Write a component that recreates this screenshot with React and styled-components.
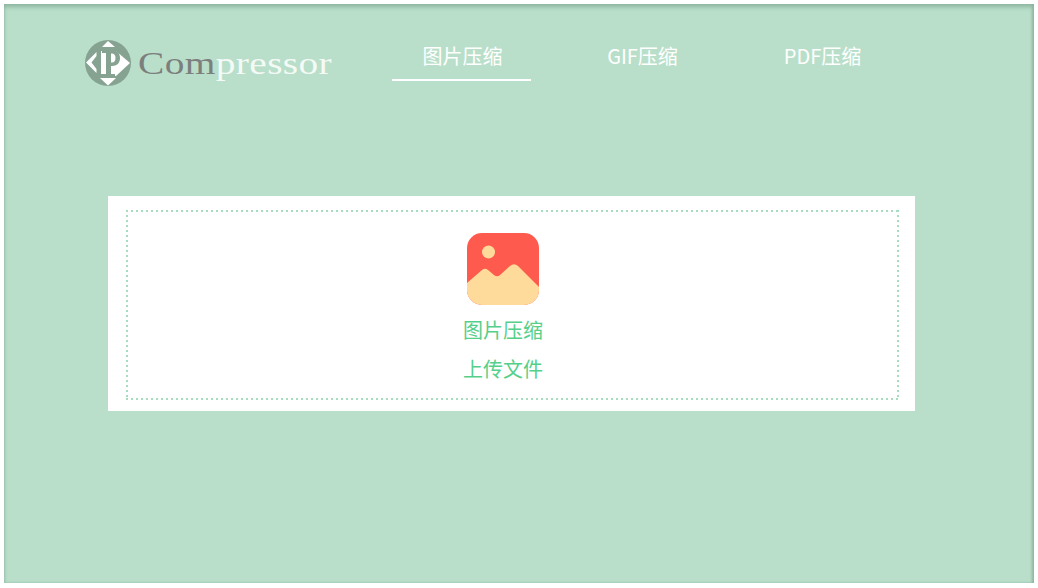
import React from "react";
import styled, { createGlobalStyle } from "styled-components";

const GlobalStyle = createGlobalStyle`
  html, body {
    margin: 0;
    padding: 0;
    background: #fff;
  }
  body {
    font-family: "Noto Sans CJK SC", "Noto Sans", sans-serif;
  }
`;

const Page = styled.div`
  box-sizing: border-box;
  width: 1038px;
  height: 588px;
  padding: 4px 4px 5px 4px;
  overflow: hidden;
`;

const Stage = styled.main`
  box-sizing: border-box;
  height: 100%;
  padding: 0 118px 0 81px;
  background: #b9dfca;
  box-shadow: inset 0 4px 4px -1px #8db59f, inset 3px 0 3px -2px #a3c9b5,
    inset -4px 0 3px -2px #8fb5a1, inset 0 -2px 2px -1px #a9cfba;
`;

const Header = styled.header`
  display: flex;
  align-items: flex-start;
  height: 192px;
  padding-top: 36px;
  box-sizing: border-box;
`;

const Brand = styled.div`
  display: flex;
  align-items: center;
  width: 307px;
  height: 46px;
  flex: none;
`;

const BrandName = styled.span`
  display: inline-block;
  margin: 2px 0 0 7px;
  font-family: "Liberation Serif", serif;
  font-size: 31px;
  line-height: 46px;
  letter-spacing: 0.3px;
  color: #f4faf6;
  transform: scaleX(1.27);
  transform-origin: left center;
`;

const BrandDark = styled.span`
  color: #7c7f7d;
`;

const Nav = styled.nav`
  display: flex;
  gap: 41px;
`;

const Tab = styled.a`
  box-sizing: border-box;
  width: 139px;
  height: 41px;
  padding: 1px 0 0 2px;
  text-align: center;
  font-size: 20px;
  line-height: 30px;
  color: #fff;
  border-bottom: 2px solid ${({ $active }) => ($active ? "#fff" : "transparent")};
`;

const UploadCard = styled.section`
  box-sizing: border-box;
  width: 807px;
  height: 215px;
  margin-left: 23px;
  padding: 14px 16px 11px 18px;
  background: #fff;
`;

const DropZone = styled.div`
  box-sizing: border-box;
  height: 100%;
  padding: 23px 19px 0 0;
  display: flex;
  flex-direction: column;
  align-items: center;
  background-image: linear-gradient(to right, #a6dcc0 2px, transparent 2px),
    linear-gradient(to right, #a6dcc0 2px, transparent 2px),
    linear-gradient(to bottom, #a6dcc0 2px, transparent 2px),
    linear-gradient(to bottom, #a6dcc0 2px, transparent 2px);
  background-size: 5px 2px, 5px 2px, 2px 5px, 2px 5px;
  background-position: left top, left bottom, left top, right top;
  background-repeat: repeat-x, repeat-x, repeat-y, repeat-y;
`;

const DropTitle = styled.div`
  margin-top: 11px;
  font-size: 20px;
  line-height: 28px;
  color: #55d08a;
`;

const DropAction = styled.div`
  margin-top: 11px;
  font-size: 20px;
  line-height: 28px;
  color: #55d08a;
`;

const LogoMark = () => (
  <svg width="46" height="46" viewBox="0 0 46 46">
    <circle cx="23" cy="23" r="23" fill="#86a291" />
    <path d="M23 1 L30 7 L17 7 Z" fill="#fff" />
    <path d="M11.5 12 L1 22.5 L11.5 33 L11.5 29 L6.5 22.5 L11.5 16 Z" fill="#fff" />
    <path d="M16 11 L31 11 L45 23 L31 36 L16 36 Z" fill="#fff" />
    <path d="M15 38 L31 38 L23 45.5 Z" fill="#fff" />
    <path
      d="M17 10 L27 10 C32 10 35 13 35 18 C35 23 32 26 27 26 L26 26 L26 34 L30 34 L30 37 L15 37 L15 34 L21 34 L21 13 L17 13 Z M26 13.5 L26 22.5 L27 22.5 C29 22.5 30.5 21 30.5 18 C30.5 15 29 13.5 27 13.5 Z"
      fill="#86a291"
      fillRule="evenodd"
    />
  </svg>
);

const PictureIcon = () => (
  <svg width="72" height="72" viewBox="0 0 72 72">
    <rect width="72" height="72" rx="15" fill="#ff5a4e" />
    <circle cx="21.5" cy="19" r="6.5" fill="#ffdb9b" />
    <path
      d="M0 50 L15 37 Q18 34.5 21 37 L27 42 Q30 44.5 33 42 L43 33 Q47 29.5 51 33 L72 54 L72 57 A15 15 0 0 1 57 72 L15 72 A15 15 0 0 1 0 57 Z"
      fill="#ffdb9b"
    />
  </svg>
);

const tabs = [
  { label: "图片压缩", active: true },
  { label: "GIF压缩" },
  { label: "PDF压缩" },
];

const App = () => (
  <Page>
    <GlobalStyle />
    <Stage>
      <Header>
        <Brand>
          <LogoMark />
          <BrandName>
            <BrandDark>Com</BrandDark>pressor
          </BrandName>
        </Brand>
        <Nav>
          {tabs.map((tab) => (
            <Tab key={tab.label} $active={tab.active}>
              {tab.label}
            </Tab>
          ))}
        </Nav>
      </Header>
      <UploadCard>
        <DropZone>
          <PictureIcon />
          <DropTitle>图片压缩</DropTitle>
          <DropAction>上传文件</DropAction>
        </DropZone>
      </UploadCard>
    </Stage>
  </Page>
);

export default App;
